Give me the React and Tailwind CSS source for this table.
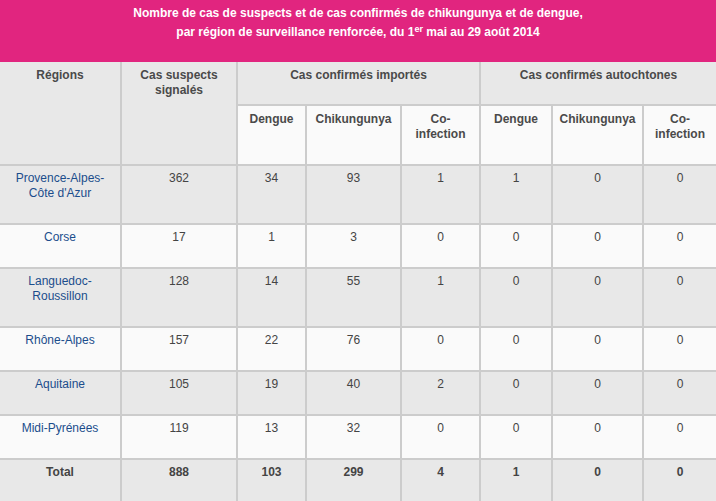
import { Fragment } from "react";

const rows = [
  { region: ["Provence-Alpes-", "Côte d'Azur"], values: [362, 34, 93, 1, 1, 0, 0] },
  { region: ["Corse"], values: [17, 1, 3, 0, 0, 0, 0] },
  { region: ["Languedoc-", "Roussillon"], values: [128, 14, 55, 1, 0, 0, 0] },
  { region: ["Rhône-Alpes"], values: [157, 22, 76, 0, 0, 0, 0] },
  { region: ["Aquitaine"], values: [105, 19, 40, 2, 0, 0, 0] },
  { region: ["Midi-Pyrénées"], values: [119, 13, 32, 0, 0, 0, 0] },
];

const totals = [888, 103, 299, 4, 1, 0, 0];

function Lines({ lines }) {
  return lines.map((l, i) => (
    <span key={i} className="block">
      {l}
    </span>
  ));
}

export default function App() {
  return (
    <div
      className="w-[716px] h-[501px] overflow-hidden bg-white text-[12px]"
      style={{ fontFamily: '"Liberation Sans", Arial, sans-serif' }}
    >
      {/* banner */}
      <div className="h-[62px] bg-[#e1257f] pt-[4px] text-center text-white font-bold leading-[19px]">
        <p>
          Nombre de cas de suspects et de cas confirmés de chikungunya et de
          dengue,
        </p>
        <p>
          par région de surveillance renforcée, du 1
          <span className="inline-block align-top text-[9px] leading-[12px]">er</span>{" "}
          mai au 29 août 2014
        </p>
      </div>

      <div className="grid grid-cols-[120px_114px_67px_93px_77px_70px_89px_72px] gap-[2px] bg-[#cccccc] text-center">
        {/* header */}
        <div className="row-span-2 bg-[#e8e8e8] pt-[6px] leading-[14px] font-bold text-[#4a4a4a]">
          Régions
        </div>
        <div className="row-span-2 bg-[#e8e8e8] pt-[6px] leading-[15px] font-bold text-[#4a4a4a]">
          Cas suspects
          <br />
          signalés
        </div>
        <div className="col-span-3 h-[42px] bg-[#e8e8e8] pt-[6px] leading-[14px] font-bold text-[#4a4a4a]">
          Cas confirmés importés
        </div>
        <div className="col-span-3 h-[42px] bg-[#e8e8e8] pt-[6px] leading-[14px] font-bold text-[#4a4a4a]">
          Cas confirmés autochtones
        </div>
        {[0, 1].map((g) => (
          <Fragment key={g}>
            <div className="h-[58px] bg-[#fafafa] pt-[6px] leading-[14px] font-bold text-[#4a4a4a]">
              Dengue
            </div>
            <div className="bg-[#fafafa] pt-[6px] leading-[14px] font-bold text-[#4a4a4a]">
              Chikungunya
            </div>
            <div className="bg-[#fafafa] pt-[6px] leading-[15px] font-bold text-[#4a4a4a]">
              Co-
              <br />
              infection
            </div>
          </Fragment>
        ))}

        {/* body */}
        {rows.map((r, i) => {
          const bg = i % 2 === 0 ? "bg-[#e8e8e8]" : "bg-[#fafafa]";
          return (
            <Fragment key={i}>
              <div className={`${bg} pt-[5px] pb-[22px] leading-[15px] text-[#1b4d8c]`}>
                <Lines lines={r.region} />
              </div>
              {r.values.map((v, j) => (
                <div key={j} className={`${bg} pt-[5px] pb-[22px] leading-[15px] text-[#444444]`}>
                  {v}
                </div>
              ))}
            </Fragment>
          );
        })}

        <div className="bg-[#e8e8e8] pt-[5px] pb-[22px] leading-[15px] font-bold text-[#444444]">
          Total
        </div>
        {totals.map((v, j) => (
          <div key={j} className="bg-[#e8e8e8] pt-[5px] pb-[22px] leading-[15px] font-bold text-[#444444]">
            {v}
          </div>
        ))}
      </div>
    </div>
  );
}
